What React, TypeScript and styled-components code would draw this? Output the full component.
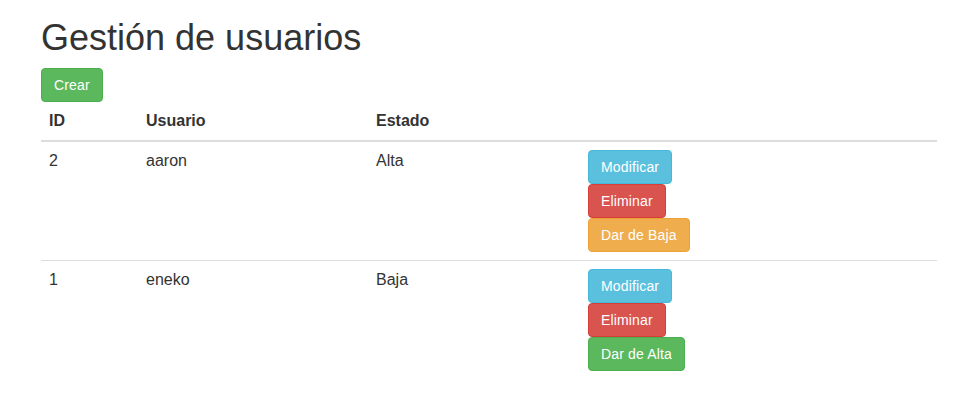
import React from "react";
import styled, { createGlobalStyle } from "styled-components";

const Global = createGlobalStyle`
  html, body { margin: 0; padding: 0; background: #fff; }
  body {
    font-family: "Liberation Sans", Arial, sans-serif;
    font-size: 14px;
    line-height: 1.42857143;
    color: #333;
  }
  * { box-sizing: border-box; }
`;

const Page = styled.div`
  padding: 0 38px 0 41px;
`;

const Title = styled.h1`
  font-size: 36px;
  font-weight: 500;
  line-height: 1.1;
  margin: 18px 0 10px;
  color: #333;
`;

type Variant = "success" | "info" | "danger" | "warning";

const palette: Record<Variant, { bg: string; border: string }> = {
  success: { bg: "#5cb85c", border: "#4cae4c" },
  info: { bg: "#5bc0de", border: "#46b8da" },
  danger: { bg: "#d9534f", border: "#d43f3a" },
  warning: { bg: "#f0ad4e", border: "#eea236" },
};

const Button = styled.button<{ $variant: Variant }>`
  display: inline-block;
  padding: 6px 12px;
  font-family: inherit;
  font-size: 14px;
  line-height: 1.42857143;
  letter-spacing: 0.15px;
  color: #fff;
  background: ${(p) => palette[p.$variant].bg};
  border: 1px solid ${(p) => palette[p.$variant].border};
  border-radius: 4px;
  cursor: pointer;
  white-space: nowrap;
`;

const Actions = styled.div`
  display: flex;
  flex-direction: column;
  align-items: flex-start;
`;

const Table = styled.table`
  width: 100%;
  border-collapse: collapse;
  border-spacing: 0;
  margin-bottom: 20px;
  font-size: 16px;
`;

const Th = styled.th<{ $w?: number }>`
  text-align: left;
  font-weight: bold;
  padding: 8px;
  line-height: 1.42857143;
  vertical-align: bottom;
  border-bottom: 2px solid #ddd;
  width: ${(p) => (p.$w ? `${p.$w}px` : "auto")};
`;

const Td = styled.td`
  padding: 8px;
  line-height: 1.42857143;
  vertical-align: top;
  border-top: 1px solid #ddd;
`;

const Row = styled.tr`
  &:first-child td { border-top: 0; }
`;

const users = [
  { id: 2, name: "aaron", estado: "Alta" },
  { id: 1, name: "eneko", estado: "Baja" },
];

export default function App() {
  return (
    <>
      <Global />
      <Page>
        <Title>Gestión de usuarios</Title>
        <Button $variant="success">Crear</Button>
        <Table>
          <thead>
            <tr>
              <Th $w={97}>ID</Th>
              <Th $w={230}>Usuario</Th>
              <Th $w={212}>Estado</Th>
              <Th></Th>
            </tr>
          </thead>
          <tbody>
            {users.map((u) => (
              <Row key={u.id}>
                <Td>{u.id}</Td>
                <Td>{u.name}</Td>
                <Td>{u.estado}</Td>
                <Td>
                  <Actions>
                    <Button $variant="info">Modificar</Button>
                    <Button $variant="danger">Eliminar</Button>
                    {u.estado === "Alta" ? (
                      <Button $variant="warning">Dar de Baja</Button>
                    ) : (
                      <Button $variant="success">Dar de Alta</Button>
                    )}
                  </Actions>
                </Td>
              </Row>
            ))}
          </tbody>
        </Table>
      </Page>
    </>
  );
}
